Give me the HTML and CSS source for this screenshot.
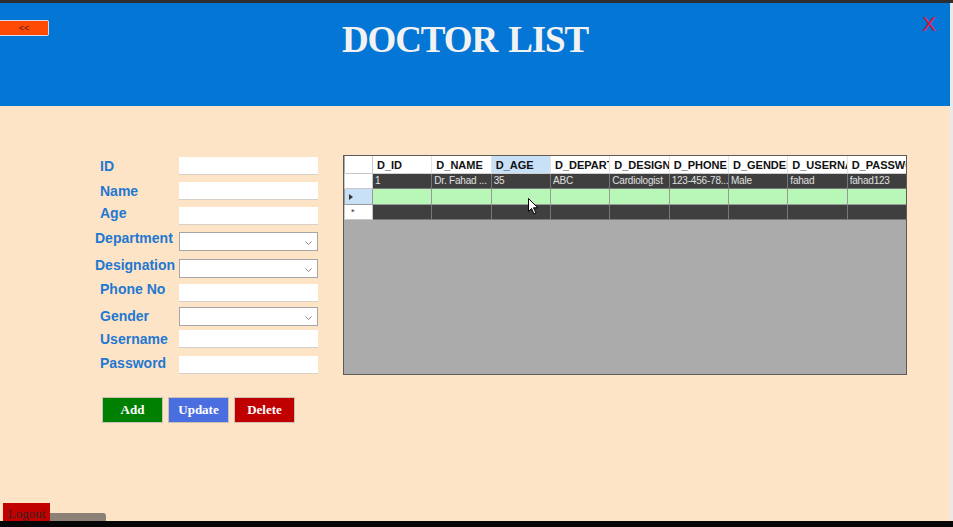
FILE: index.html
```html
<!DOCTYPE html>
<html>
<head>
<meta charset="utf-8">
<link rel="stylesheet" href="styles.css">
</head>
<body>
<div class="app">
  <div class="topline"></div>
  <header class="header">
    <button class="back">&lt;&lt;</button>
    <h1 class="title">DOCTOR LIST</h1>
    <span class="close">X</span>
  </header>
  <main class="main">
    <div class="content">
      <div class="formcol">
        <div class="form">
          <label class="lbl">ID</label><div class="inp"></div>
          <label class="lbl">Name</label><div class="inp"></div>
          <label class="lbl up3">Age</label><div class="inp"></div>
          <label class="lbl up3 wide">Department</label><div class="sel"><svg class="chev" width="7" height="4" viewBox="0 0 7 4"><path d="M0.5 0.5 L3.5 3.5 L6.5 0.5" fill="none" stroke="#888" stroke-width="1"/></svg></div>
          <label class="lbl up3 wide">Designation</label><div class="sel"><svg class="chev" width="7" height="4" viewBox="0 0 7 4"><path d="M0.5 0.5 L3.5 3.5 L6.5 0.5" fill="none" stroke="#888" stroke-width="1"/></svg></div>
          <label class="lbl up4">Phone No</label><div class="inp"></div>
          <label class="lbl">Gender</label><div class="sel"><svg class="chev" width="7" height="4" viewBox="0 0 7 4"><path d="M0.5 0.5 L3.5 3.5 L6.5 0.5" fill="none" stroke="#888" stroke-width="1"/></svg></div>
          <label class="lbl">Username</label><div class="inp"></div>
          <label class="lbl up2">Password</label><div class="inp"></div>
        </div>
        <div class="actions">
          <button class="btn add">Add</button>
          <button class="btn update">Update</button>
          <button class="btn delete">Delete</button>
        </div>
      </div>
      <div class="gridwrap">
        <table class="grid">
          <colgroup>
            <col class="c-rh"><col><col><col><col><col><col><col><col><col>
          </colgroup>
          <thead>
            <tr>
              <th class="rh"></th>
              <th>D_ID</th><th>D_NAME</th><th class="sorted">D_AGE</th><th>D_DEPARTMENT</th><th>D_DESIGNATION</th><th>D_PHONE</th><th>D_GENDER</th><th>D_USERNAME</th><th>D_PASSWORD</th>
            </tr>
          </thead>
          <tbody>
            <tr class="dark">
              <td class="rh"></td>
              <td>1</td><td>Dr. Fahad ...</td><td>35</td><td>ABC</td><td>Cardiologist</td><td>123-456-78...</td><td>Male</td><td>fahad</td><td>fahad123</td>
            </tr>
            <tr class="green">
              <td class="rh cur"><svg width="4" height="6" viewBox="0 0 4 6"><path d="M0 0 L4 3 L0 6 Z" fill="#333"/></svg></td>
              <td></td><td></td><td></td><td></td><td></td><td></td><td></td><td></td><td></td>
            </tr>
            <tr class="dark new">
              <td class="rh">*</td>
              <td></td><td></td><td></td><td></td><td></td><td></td><td></td><td></td><td></td>
            </tr>
          </tbody>
        </table>
        <svg class="cursor" width="11" height="17" viewBox="0 0 11 17"><path d="M0.5 0.5 L0.5 13.5 L3.5 10.5 L6 16 L8 15 L5.5 9.8 L9.8 9.8 Z" fill="#fff" stroke="#000" stroke-width="1"/></svg>
      </div>
    </div>
    <div class="footer">
      <button class="logout">Logout</button>
      <div class="scrub"></div>
    </div>
  </main>
  <div class="bottomline"></div>
</div>
</body>
</html>
```
FILE: styles.css
```css
html, body {
  margin: 0;
  padding: 0;
}
body {
  background: #e9e9e9;
  width: 953px;
  height: 527px;
  overflow: hidden;
  font-family: "Liberation Sans", Arial, sans-serif;
}
.app {
  width: 953px;
  height: 527px;
  display: flex;
  flex-direction: column;
}
.topline {
  height: 3px;
  background: #2e2e2e;
  width: 953px;
}
.header {
  width: 950px;
  height: 103px;
  background: #0376d6;
  position: relative;
  display: flex;
  justify-content: center;
}
.back {
  position: absolute;
  left: 0;
  top: 17px;
  width: 49px;
  height: 16px;
  background: #ff4a05;
  border: 1px solid #d8d8e8;
  border-left: none;
  border-radius: 0 2px 2px 0;
  color: #5a1a0a;
  font-family: "Liberation Sans", sans-serif;
  font-size: 9px;
  padding: 0;
  line-height: 14px;
}
.title {
  margin: 15px 0 0 -20px;
  font-family: "Liberation Serif", "Times New Roman", serif;
  font-weight: bold;
  font-size: 37px;
  color: #f2f2f2;
  letter-spacing: -1.1px;
  word-spacing: 3px;
  line-height: 44px;
  height: 44px;
}
.close {
  position: absolute;
  right: 14px;
  top: 9px;
  color: #e3133b;
  font-family: "Liberation Sans", sans-serif;
  font-size: 21px;
  line-height: 24px;
}
.main {
  width: 950px;
  height: 415px;
  background: #fee4c6;
  display: flex;
  flex-direction: column;
}
.content {
  display: flex;
  align-items: flex-start;
  padding-top: 49px;
}
.formcol {
  margin-left: 95px;
  margin-top: 2px;
  width: 223px;
}
.form {
  display: grid;
  grid-template-columns: 84px 139px;
  grid-template-rows: 25px 25px 25px 27px 25px 23px 23px 26px 17px;
}
.lbl {
  font-weight: bold;
  font-size: 14px;
  line-height: 17px;
  color: #1f78d1;
  padding-left: 5px;
  white-space: nowrap;
  align-self: start;
  margin-top: 1px;
}
.lbl.wide { padding-left: 0; }
.lbl.up2 { margin-top: -1px; }
.lbl.up3 { margin-top: -2px; }
.lbl.up4 { margin-top: -3px; }
.inp {
  height: 17px;
  background: #fff;
  box-shadow: 0 1px 0 #d6d0c8;
  align-self: start;
}
.sel {
  height: 17px;
  background: #fff;
  border: 1px solid #a6a6a6;
  align-self: start;
  display: flex;
  align-items: center;
  justify-content: flex-end;
  padding-right: 5px;
  box-sizing: content-box;
  width: 132px;
}
.chev { display: block; margin-top: 2px; }
.actions {
  display: flex;
  gap: 5px;
  margin-top: 24px;
  margin-left: 7px;
}
.btn {
  width: 61px;
  height: 26px;
  border: 1px solid #c9c1b5;
  color: #fff;
  font-family: "Liberation Serif", "Times New Roman", serif;
  font-weight: bold;
  font-size: 13px;
  padding: 0;
}
.add { background: #008000; }
.update { background: #4a6ee0; }
.delete { background: #c00000; }
.gridwrap {
  margin-left: 25px;
  width: 562px;
  height: 218px;
  background: #ababab;
  border: 1px solid #5e5a56;
  position: relative;
  overflow: hidden;
}
.grid {
  border-collapse: collapse;
  table-layout: fixed;
  width: 562px;
}
.grid col { width: 59.33px; }
.grid col.c-rh { width: 28px; }
.grid th, .grid td {
  overflow: hidden;
  white-space: nowrap;
  text-align: left;
  text-overflow: clip;
}
.grid th {
  height: 17px;
  padding: 0 0 0 4px;
  background: #fff;
  font-weight: bold;
  font-size: 11px;
  color: #111;
  border-right: 1px solid #e2e2e2;
  border-bottom: 1px solid #d0d0d0;
}
.grid th.sorted { background: #c9e1f7; }
.grid td {
  padding: 0 0 0 2px;
  font-size: 10px;
  letter-spacing: -0.2px;
  height: 14px;
  line-height: 14px;
  border: 1px solid #777;
  border-top: none;
}
.grid tr.dark td {
  background: #3f3f3f;
  color: #e0e0e0;
}
.grid tr.green td {
  background: #b8f7b8;
  border-color: #9a9a9a;
}
.grid tr.green td { height: 15px; }
.grid td.rh, .grid th.rh {
  background: #fff;
  border-color: #c8c8c8;
  padding: 0 0 0 4px;
}
.grid tr.dark td.rh { background: #fff; color: #333; }
.grid tr.green td.rh.cur { background: #c9e1f7; }
.grid td.rh svg { display: block; }
.grid tr.new td.rh { font-size: 9px; line-height: 12px; padding-left: 6px; }
.cursor {
  position: absolute;
  left: 184px;
  top: 42px;
}
.footer {
  margin-top: auto;
  display: flex;
  align-items: flex-end;
  padding-left: 3px;
}
.logout {
  width: 47px;
  height: 18px;
  background: #c10000;
  border: none;
  color: #3a2020;
  font-family: "Liberation Serif", "Times New Roman", serif;
  font-size: 13px;
  padding: 3px 0 0 0;
  line-height: 16px;
}
.scrub {
  width: 56px;
  height: 8px;
  background: #8b8176;
  border-radius: 0 3px 0 0;
}
.bottomline {
  height: 6px;
  width: 953px;
  background: #060606;
}
```
